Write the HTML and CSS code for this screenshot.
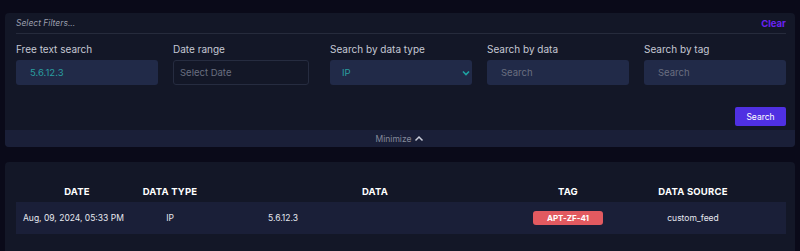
FILE: index.html
```html
<!DOCTYPE html>
<html lang="en">
<head>
  <meta charset="UTF-8" />
  <title>Feed search</title>
  <link rel="stylesheet" href="styles.css">
</head>
<body>
  <section class="filters">
    <div class="filters-head">
      <span class="filters-title">Select Filters...</span>
      <a class="clear-link">Clear</a>
    </div>
    <div class="filters-grid">
      <div class="field">
        <label>Free text search</label>
        <div class="input filled">5.6.12.3</div>
      </div>
      <div class="field">
        <label>Date range</label>
        <div class="input date placeholder">Select Date</div>
      </div>
      <div class="field">
        <label>Search by data type</label>
        <div class="input select filled">
          <span>IP</span>
          <svg width="8" height="6" viewBox="0 0 8 6"><path d="M1 1.5 L4 4.5 L7 1.5" fill="none" stroke="#1fa3a3" stroke-width="1.6"/></svg>
        </div>
      </div>
      <div class="field">
        <label>Search by data</label>
        <div class="input placeholder">Search</div>
      </div>
      <div class="field">
        <label>Search by tag</label>
        <div class="input placeholder">Search</div>
      </div>
    </div>
    <div class="filters-actions">
      <button class="search-button">Search</button>
    </div>
    <div class="minimize">
      Minimize
      <svg width="10" height="7" viewBox="0 0 10 7"><path d="M1.5 5.5 L5 2 L8.5 5.5" fill="none" stroke="#c9ccd8" stroke-width="1.5"/></svg>
    </div>
  </section>

  <section class="results">
    <div class="results-head">
      <div class="col-date">Date</div>
      <div class="col-type">Data type</div>
      <div class="col-data">Data</div>
      <div class="col-tag">Tag</div>
      <div class="col-source">Data source</div>
    </div>
    <div class="results-row">
      <div class="col-date">Aug, 09, 2024, 05:33 PM</div>
      <div class="col-type">IP</div>
      <div class="col-data cell-data">5.6.12.3</div>
      <div class="col-tag"><span class="tag">APT-ZF-41</span></div>
      <div class="col-source">custom_feed</div>
    </div>
  </section>
</body>
</html>
```

FILE: styles.css
```css
html, body {
  margin: 0;
  padding: 0;
  background: #0a0a19;
  font-family: Inter, 'Noto Sans', sans-serif;
  color: #c5c8d4;
  overflow: hidden;
}
body {
  padding: 13px 5px 0;
}
.filters {
  background: #131727;
  border-radius: 4px;
  overflow: hidden;
}
.filters-head {
  margin: 0 9px 0 11px;
  height: 20px;
  display: flex;
  align-items: center;
  justify-content: space-between;
  border-bottom: 1px solid #262b3c;
}
.filters-title {
  font-size: 8.5px;
  font-style: italic;
  color: #9a9eac;
}
.clear-link {
  font-size: 9.5px;
  font-weight: 700;
  color: #6a22f2;
}
.filters-grid {
  display: grid;
  grid-template-columns: repeat(5, 142px);
  column-gap: 15px;
  padding: 8px 0 0 11px;
}
.field label {
  display: block;
  font-size: 10px;
  color: #c5c8d4;
  height: 18px;
  line-height: 14px;
}
.input {
  height: 25px;
  box-sizing: border-box;
  border-radius: 3px;
  background: #212a48;
  font-size: 9.5px;
  display: flex;
  align-items: center;
  padding-left: 14px;
}
.input.filled {
  color: #2a9fa0;
}
.input.placeholder {
  color: #6a6f80;
}
.input.date {
  width: 136px;
  background: #131727;
  border: 1px solid #262c40;
  padding-left: 6px;
}
.input.select {
  justify-content: space-between;
  padding: 0 2px 0 12px;
}
.filters-actions {
  display: flex;
  justify-content: flex-end;
  padding: 22px 9px 4px 0;
}
.search-button {
  width: 51px;
  height: 19px;
  border: none;
  border-radius: 2px;
  background: #4f30e2;
  color: #ffffff;
  font-family: inherit;
  font-size: 8.5px;
  padding: 0;
}
.minimize {
  height: 17px;
  background: #1a1f38;
  display: flex;
  align-items: center;
  justify-content: center;
  gap: 3px;
  font-size: 8.5px;
  color: #858a9a;
}
.results {
  margin-top: 15px;
  background: #131727;
  border-radius: 4px 4px 0 0;
  padding: 0 9px 20px 11px;
}
.results-head,
.results-row {
  display: grid;
  grid-template-columns: 122px 64px 318px 96px 1fr;
  align-items: center;
}
.results-head {
  height: 22px;
  padding-top: 18px;
  font-size: 9.5px;
  letter-spacing: 0.2px;
  font-weight: 700;
  text-transform: uppercase;
  color: #ffffff;
  text-align: center;
}
.results-head .col-data {
  padding-left: 28px;
}
.col-source {
  padding-right: 16px;
}
.results-row {
  height: 32px;
  background: #1a1f38;
  font-size: 8.5px;
  color: #e6e8ef;
  text-align: center;
}
.results-row .col-date {
  text-align: left;
  padding-left: 7px;
}
.cell-data {
  text-align: left;
  padding-left: 66px;
}
.tag {
  display: inline-block;
  width: 70px;
  height: 14px;
  line-height: 14px;
  border-radius: 3px;
  background: #e25a60;
  color: #ffffff;
  font-size: 8px;
  font-weight: 700;
}
```
